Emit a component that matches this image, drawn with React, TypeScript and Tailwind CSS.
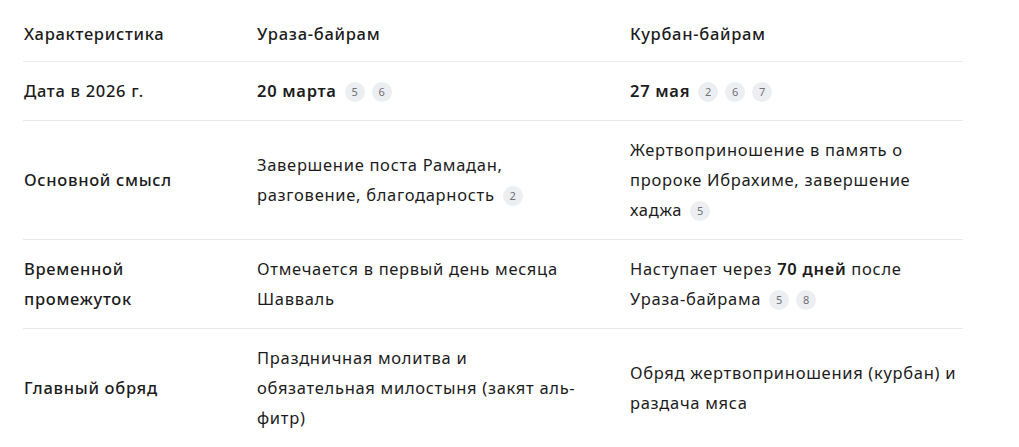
import React from "react";

// small grey citation bubbles after a cell's text
const Refs = ({ nums }: { nums: string[] }) => (
  <>
    {nums.map((n, i) => (
      <span
        key={n + i}
        className={
          "inline-flex items-center justify-center w-5 h-5 rounded-full bg-[#eceef1] text-[11px] leading-none tracking-normal text-[#6e7279] align-middle relative -top-px " +
          (i === 0 ? "ml-2" : "ml-[7px]")
        }
      >
        {n}
      </span>
    ))}
  </>
);

type Row = {
  label: string;
  a: React.ReactNode;
  b: React.ReactNode;
};

const rows: Row[] = [
  {
    label: "Дата в 2026 г.",
    a: (
      <span className="whitespace-nowrap">
        <span className="font-semibold">20 марта</span>
        <Refs nums={["5", "6"]} />
      </span>
    ),
    b: (
      <span className="whitespace-nowrap">
        <span className="font-semibold">27 мая</span>
        <Refs nums={["2", "6", "7"]} />
      </span>
    ),
  },
  {
    label: "Основной смысл",
    a: (
      <>
        Завершение поста Рамадан, разговение,{" "}
        <span className="whitespace-nowrap">
          благодарность
          <Refs nums={["2"]} />
        </span>
      </>
    ),
    b: (
      <>
        Жертвоприношение в память о пророке Ибрахиме, завершение{" "}
        <span className="whitespace-nowrap">
          хаджа
          <Refs nums={["5"]} />
        </span>
      </>
    ),
  },
  {
    label: "Временной промежуток",
    a: <>Отмечается в первый день месяца Шавваль</>,
    b: (
      <>
        Наступает через <span className="font-semibold">70 дней</span> после{" "}
        <span className="whitespace-nowrap">
          Ураза-байрама
          <Refs nums={["5", "8"]} />
        </span>
      </>
    ),
  },
  {
    label: "Главный обряд",
    a: <>Праздничная молитва и обязательная милостыня (закят аль-фитр)</>,
    b: <>Обряд жертвоприношения (курбан) и раздача мяса</>,
  },
];

export default function App() {
  return (
    <div
      className="min-h-screen bg-white px-[23px] text-[16.5px] leading-[30px] tracking-[0.7px] text-[#1c1c1c]"
      style={{ fontFamily: "'Noto Sans', 'Open Sans', sans-serif" }}
    >
      <div className="w-[940px]">
        {/* header */}
        <div className="grid grid-cols-[234px_373px_1fr] border-b border-[#e9e9e9] pt-[19px] pb-[12px] font-medium">
          <div className="pl-px pr-[34px]">Характеристика</div>
          <div className="pr-[40px]">Ураза-байрам</div>
          <div>Курбан-байрам</div>
        </div>
        {rows.map((r) => (
          <div
            key={r.label}
            className="grid grid-cols-[234px_373px_1fr] items-center border-b border-[#e9e9e9] py-[14px]"
          >
            <div className="pl-px pr-[34px] font-medium">{r.label}</div>
            <div className="pr-[40px]">{r.a}</div>
            <div>{r.b}</div>
          </div>
        ))}
      </div>
    </div>
  );
}
